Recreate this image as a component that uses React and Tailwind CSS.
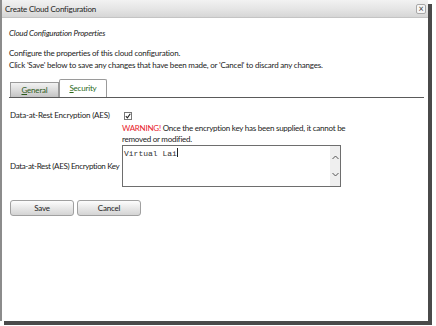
import React from 'react';

const font = { fontFamily: 'Lato, "Noto Sans", sans-serif' };

function Button({ children }) {
  return (
    <button className="h-[16px] w-[64px] rounded-[3px] border border-[#a0a0a0] bg-gradient-to-b from-[#fdfdfd] via-[#e8e8e8] to-[#d4d4d4] text-[8px] leading-none text-[#222]">
      {children}
    </button>
  );
}

export default function App() {
  return (
    <div className="h-[326px] w-[436px] bg-white tracking-[-0.2px]" style={font}>
      <div className="flex h-[321px] w-[428px] flex-col border-l-2 border-[#8c8c8c] bg-white shadow-[4px_4px_0_#4a4a4a]">
        {/* title bar */}
        <div className="flex h-[18px] items-center justify-between border-b border-[#c4c4c4] bg-gradient-to-b from-[#f2f2f2] via-[#e6e6e6] to-[#d6d6d6] pl-[3px] pr-[2px]">
          <span className="text-[8px] text-[#222]">Create Cloud Configuration</span>
          <div className="flex h-[10px] w-[10px] items-center justify-center rounded-[2px] border border-[#a8a8a8] bg-[#f6f6f6] text-[9px] leading-none text-[#444]">
            ×
          </div>
        </div>

        <div className="flex flex-col pl-[7px] pr-[4px] text-[8px] leading-[11px] text-[#222]">
          <div className="mt-[10px] italic">Cloud Configuration Properties</div>
          <div className="mt-[9px]">Configure the properties of this cloud configuration.</div>
          <div className="mt-px">Click 'Save' below to save any changes that have been made, or 'Cancel' to discard any changes.</div>

          {/* tabs */}
          <div className="mt-[8px] flex items-end border-b border-[#5a5a5a]">
            <div className="ml-px flex h-[15px] w-[49px] items-center justify-center border border-b-0 border-[#9a9a9a] bg-gradient-to-b from-[#f2f2f2] via-[#dcdcdc] to-[#c4c4c4] text-[#2c5a1a]">
              <span><span className="underline">G</span>eneral</span>
            </div>
            <div className="flex h-[18px] w-[48px] items-center justify-center rounded-t-[2px] border border-b-0 border-[#9a9a9a] bg-white text-[#2c6a1a]">
              <span><span className="underline">S</span>ecurity</span>
            </div>
          </div>

          {/* form */}
          <div className="mt-[12px] flex items-center">
            <div className="w-[113px] whitespace-nowrap pl-px">Data-at-Rest Encryption (AES)</div>
            <div className="ml-[2px] flex h-[8px] w-[8px] items-center justify-center border border-[#777] bg-white">
              <svg width="6" height="6" viewBox="0 0 6 6">
                <path d="M0.8 3.2 L2.4 4.8 L5.3 0.8" fill="none" stroke="#222" strokeWidth="1.1" />
              </svg>
            </div>
          </div>
          <div className="ml-[113px] mt-[2px] w-[234px] tracking-[-0.25px]">
            <span className="text-[#e8202a]">WARNING!</span> Once the encryption key has been supplied, it cannot be removed or modified.
          </div>
          <div className="flex items-center">
            <div className="w-[113px] whitespace-nowrap pl-px tracking-[-0.35px]">Data-at-Rest (AES) Encryption Key</div>
            <div className="flex h-[42px] w-[219px] border border-[#6e6e6e] bg-white">
              <div className="flex-1 pl-px pt-px text-[8px] leading-[10px] tracking-normal text-[#333]" style={{ fontFamily: '"Liberation Mono", monospace' }}>
                Virtual Lai<span className="inline-block h-[9px] w-px translate-y-[1px] bg-[#222]" />
              </div>
              <div className="flex w-[10px] flex-col items-center justify-between bg-[#efefef] py-[9px]">
                <svg width="7" height="5" viewBox="0 0 7 5"><path d="M0.5 4 L3.5 1 L6.5 4" fill="none" stroke="#555" strokeWidth="1" /></svg>
                <svg width="7" height="5" viewBox="0 0 7 5"><path d="M0.5 1 L3.5 4 L6.5 1" fill="none" stroke="#555" strokeWidth="1" /></svg>
              </div>
            </div>
          </div>

          <div className="mt-[13px] flex gap-[3px] pl-px">
            <Button>Save</Button>
            <Button>Cancel</Button>
          </div>
        </div>
      </div>
    </div>
  );
}
